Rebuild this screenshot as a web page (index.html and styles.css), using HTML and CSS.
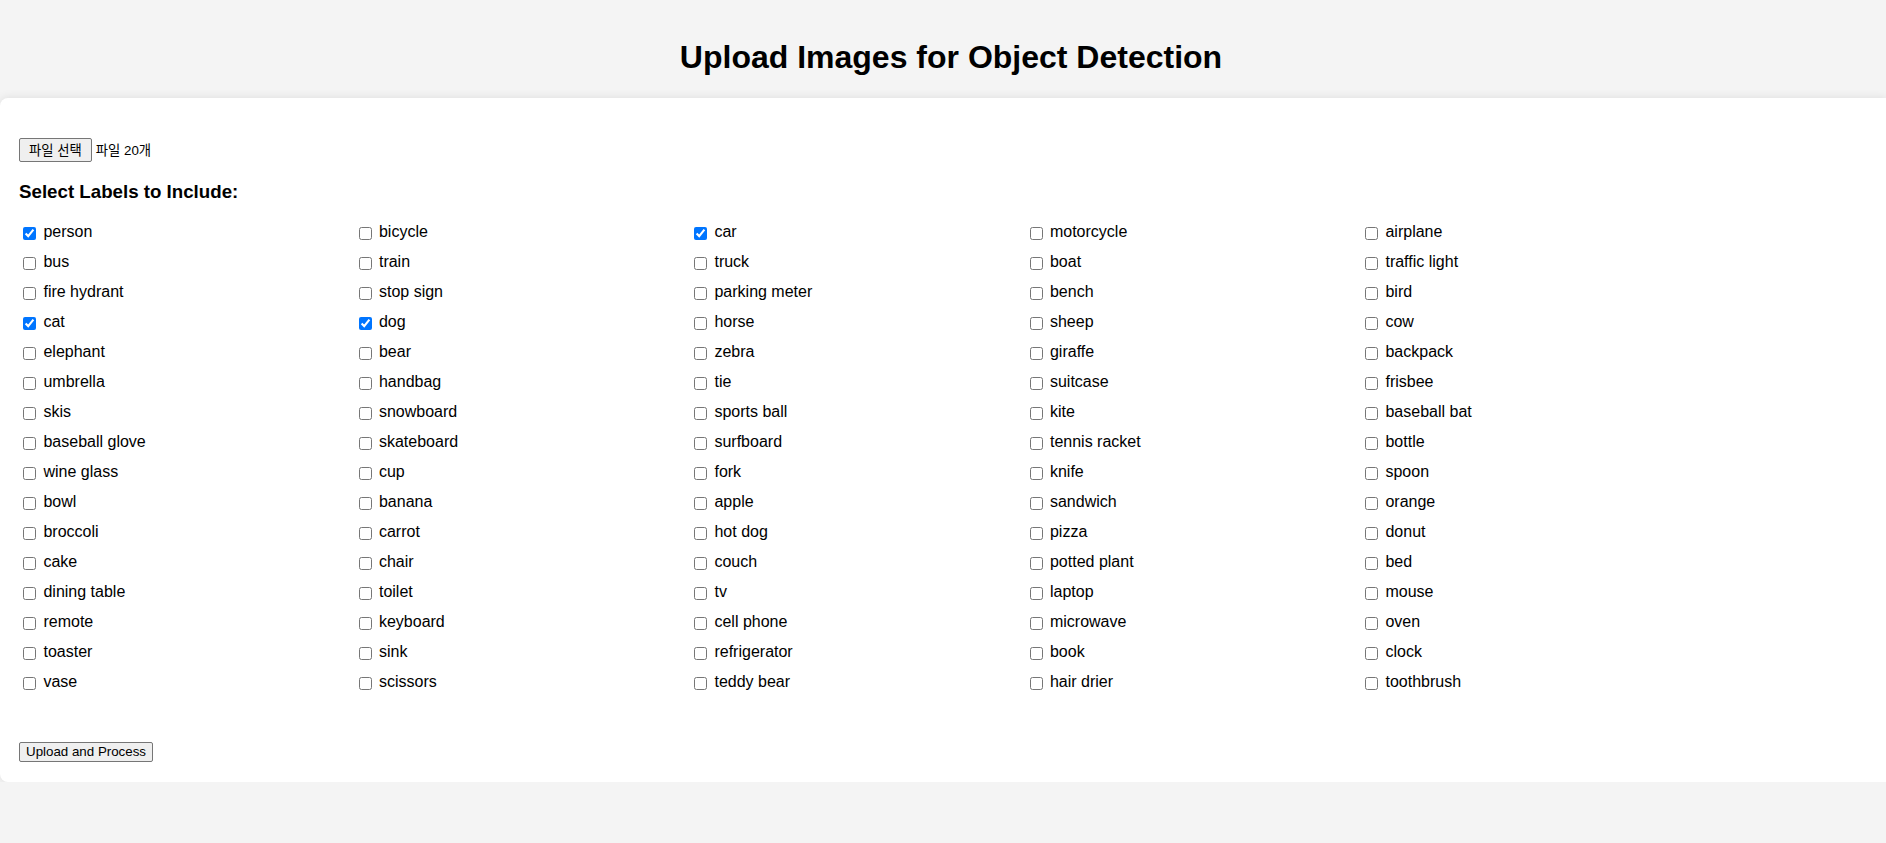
FILE: index.html
```html
<!DOCTYPE html>
<html lang="en">
<head>
<meta charset="utf-8">
<title>Upload Images for Object Detection</title>
<link rel="stylesheet" href="styles.css">
</head>
<body>
<h1 class="title">Upload Images for Object Detection</h1>
<form class="card">
  <div class="file-row">
    <button type="button" class="btn file-btn">파일 선택</button>
    <span class="file-name">파일 20개</span>
  </div>
  <h3 class="section-title">Select Labels to Include:</h3>
  <div class="labels">
    <label class="item"><input type="checkbox" checked> person</label>
    <label class="item"><input type="checkbox"> bicycle</label>
    <label class="item"><input type="checkbox" checked> car</label>
    <label class="item"><input type="checkbox"> motorcycle</label>
    <label class="item"><input type="checkbox"> airplane</label>
    <label class="item"><input type="checkbox"> bus</label>
    <label class="item"><input type="checkbox"> train</label>
    <label class="item"><input type="checkbox"> truck</label>
    <label class="item"><input type="checkbox"> boat</label>
    <label class="item"><input type="checkbox"> traffic light</label>
    <label class="item"><input type="checkbox"> fire hydrant</label>
    <label class="item"><input type="checkbox"> stop sign</label>
    <label class="item"><input type="checkbox"> parking meter</label>
    <label class="item"><input type="checkbox"> bench</label>
    <label class="item"><input type="checkbox"> bird</label>
    <label class="item"><input type="checkbox" checked> cat</label>
    <label class="item"><input type="checkbox" checked> dog</label>
    <label class="item"><input type="checkbox"> horse</label>
    <label class="item"><input type="checkbox"> sheep</label>
    <label class="item"><input type="checkbox"> cow</label>
    <label class="item"><input type="checkbox"> elephant</label>
    <label class="item"><input type="checkbox"> bear</label>
    <label class="item"><input type="checkbox"> zebra</label>
    <label class="item"><input type="checkbox"> giraffe</label>
    <label class="item"><input type="checkbox"> backpack</label>
    <label class="item"><input type="checkbox"> umbrella</label>
    <label class="item"><input type="checkbox"> handbag</label>
    <label class="item"><input type="checkbox"> tie</label>
    <label class="item"><input type="checkbox"> suitcase</label>
    <label class="item"><input type="checkbox"> frisbee</label>
    <label class="item"><input type="checkbox"> skis</label>
    <label class="item"><input type="checkbox"> snowboard</label>
    <label class="item"><input type="checkbox"> sports ball</label>
    <label class="item"><input type="checkbox"> kite</label>
    <label class="item"><input type="checkbox"> baseball bat</label>
    <label class="item"><input type="checkbox"> baseball glove</label>
    <label class="item"><input type="checkbox"> skateboard</label>
    <label class="item"><input type="checkbox"> surfboard</label>
    <label class="item"><input type="checkbox"> tennis racket</label>
    <label class="item"><input type="checkbox"> bottle</label>
    <label class="item"><input type="checkbox"> wine glass</label>
    <label class="item"><input type="checkbox"> cup</label>
    <label class="item"><input type="checkbox"> fork</label>
    <label class="item"><input type="checkbox"> knife</label>
    <label class="item"><input type="checkbox"> spoon</label>
    <label class="item"><input type="checkbox"> bowl</label>
    <label class="item"><input type="checkbox"> banana</label>
    <label class="item"><input type="checkbox"> apple</label>
    <label class="item"><input type="checkbox"> sandwich</label>
    <label class="item"><input type="checkbox"> orange</label>
    <label class="item"><input type="checkbox"> broccoli</label>
    <label class="item"><input type="checkbox"> carrot</label>
    <label class="item"><input type="checkbox"> hot dog</label>
    <label class="item"><input type="checkbox"> pizza</label>
    <label class="item"><input type="checkbox"> donut</label>
    <label class="item"><input type="checkbox"> cake</label>
    <label class="item"><input type="checkbox"> chair</label>
    <label class="item"><input type="checkbox"> couch</label>
    <label class="item"><input type="checkbox"> potted plant</label>
    <label class="item"><input type="checkbox"> bed</label>
    <label class="item"><input type="checkbox"> dining table</label>
    <label class="item"><input type="checkbox"> toilet</label>
    <label class="item"><input type="checkbox"> tv</label>
    <label class="item"><input type="checkbox"> laptop</label>
    <label class="item"><input type="checkbox"> mouse</label>
    <label class="item"><input type="checkbox"> remote</label>
    <label class="item"><input type="checkbox"> keyboard</label>
    <label class="item"><input type="checkbox"> cell phone</label>
    <label class="item"><input type="checkbox"> microwave</label>
    <label class="item"><input type="checkbox"> oven</label>
    <label class="item"><input type="checkbox"> toaster</label>
    <label class="item"><input type="checkbox"> sink</label>
    <label class="item"><input type="checkbox"> refrigerator</label>
    <label class="item"><input type="checkbox"> book</label>
    <label class="item"><input type="checkbox"> clock</label>
    <label class="item"><input type="checkbox"> vase</label>
    <label class="item"><input type="checkbox"> scissors</label>
    <label class="item"><input type="checkbox"> teddy bear</label>
    <label class="item"><input type="checkbox"> hair drier</label>
    <label class="item"><input type="checkbox"> toothbrush</label>
  </div>
  <div class="actions">
    <button type="button" class="btn">Upload and Process</button>
  </div>
</form>
</body>
</html>
```

FILE: styles.css
```css
html, body {
  margin: 0;
  padding: 0;
}

body {
  background: #f4f4f4;
  font-family: "Liberation Sans", Arial, sans-serif;
  color: #000;
  padding-top: 18px;
}

.title {
  margin: 21.44px 0;
  padding-left: 16px;
  font-size: 32px;
  font-weight: bold;
  text-align: center;
}

.card {
  display: block;
  background: #fff;
  border-radius: 8px 0 0 8px;
  box-shadow: 0 0 10px rgba(0, 0, 0, 0.1);
  padding: 40px 20px 20px 19px;
}

.file-row {
  display: flex;
  align-items: center;
  gap: 4px;
  font-size: 13.33px;
}

.btn {
  font-family: "Liberation Sans", Arial, sans-serif;
  font-size: 13.33px;
  color: #000;
  background: #efefef;
  border: 1px solid #767676;
  border-radius: 2px;
  padding: 1px 6px 2px;
  margin: 0;
}

.file-btn {
  font-family: "Liberation Sans", "Noto Sans CJK KR", sans-serif;
  padding: 1px 9px 2px;
}

.file-name {
  font-family: "Liberation Sans", "Noto Sans CJK KR", sans-serif;
}

.section-title {
  font-size: 18.72px;
  font-weight: bold;
  margin: 18.72px 0;
}

.labels {
  display: grid;
  grid-template-columns: repeat(5, 335.5px);
  grid-auto-rows: 20px;
  row-gap: 10px;
  padding-top: 1px;
  font-size: 16px;
}

.item {
  display: flex;
  align-items: center;
  white-space: pre;
}

.item input {
  margin: 4px 3px 2px 4px;
  width: 13px;
  height: 13px;
}

.actions {
  margin-top: 50px;
}
```
